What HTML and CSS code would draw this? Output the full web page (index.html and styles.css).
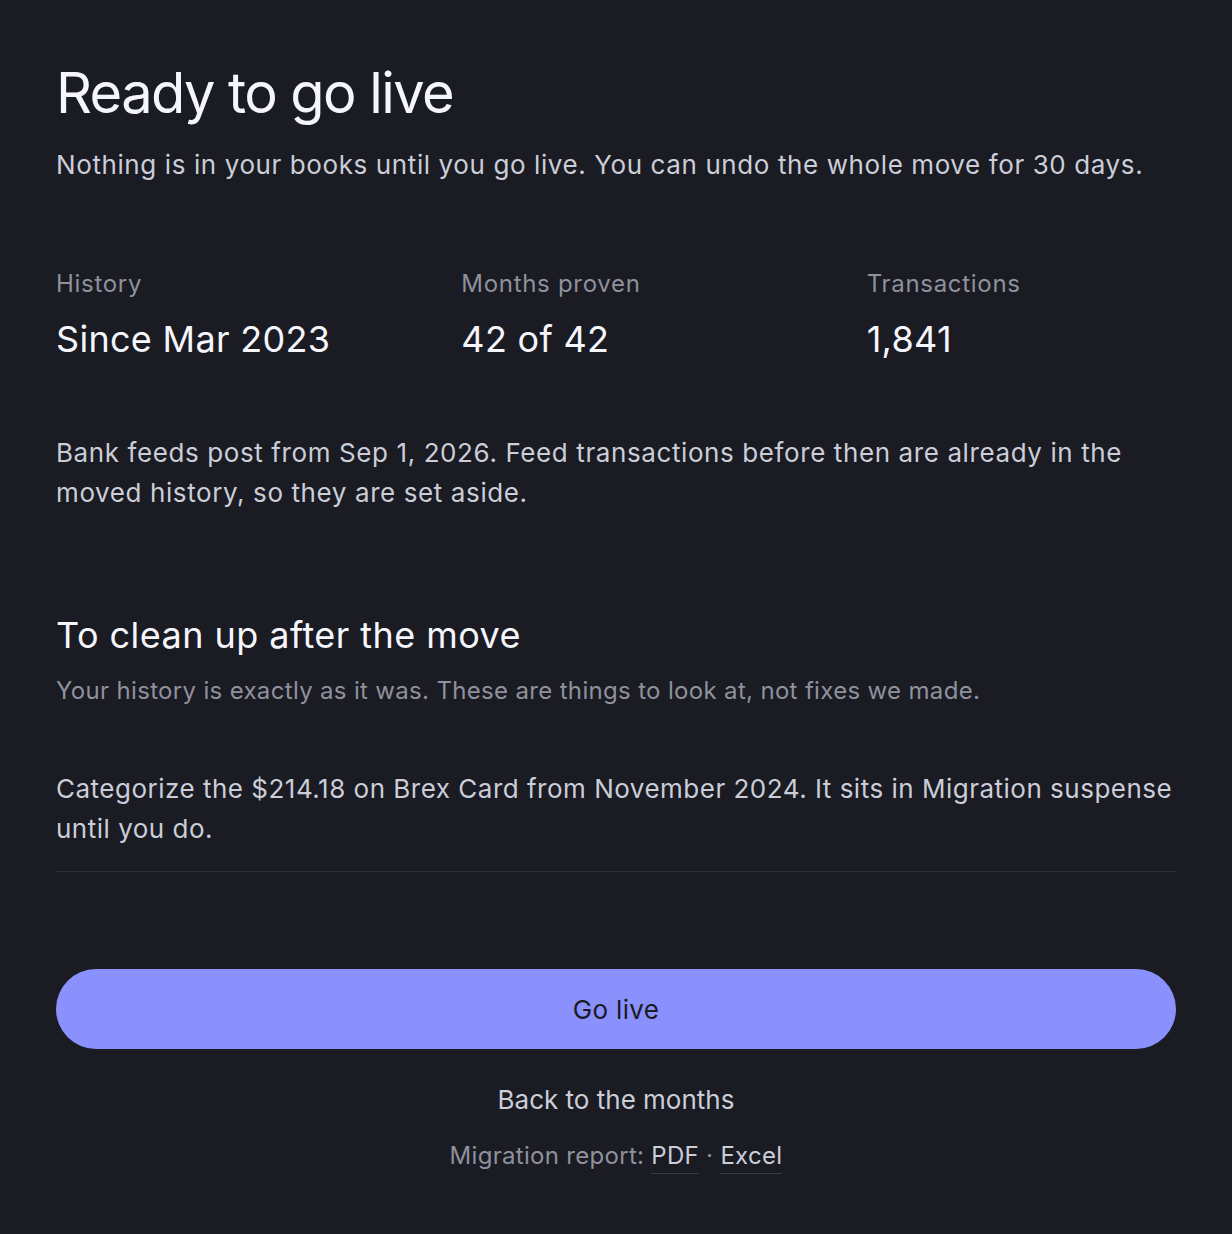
FILE: index.html
```html
<!DOCTYPE html>
<html lang="en">
<head>
    <meta charset="UTF-8">
    <meta name="viewport" content="width=device-width, initial-scale=1.0">
    <title>Ready to go live</title>
    <link rel="stylesheet" href="styles.css">
</head>
<body>

    <div class="page">
        <!-- Header -->
        <h1 class="title">Ready to go live</h1>
        <p class="lead">Nothing is in your books until you go live. You can undo the whole move for 30 days.</p>

        <!-- Stats -->
        <div class="stats">
            <div class="stat">
                <div class="stat-label">History</div>
                <div class="stat-value">Since Mar 2023</div>
            </div>
            <div class="stat">
                <div class="stat-label">Months proven</div>
                <div class="stat-value">42 of 42</div>
            </div>
            <div class="stat">
                <div class="stat-label">Transactions</div>
                <div class="stat-value">1,841</div>
            </div>
        </div>

        <p class="note">Bank feeds post from Sep 1, 2026. Feed transactions before then are already in the moved history, so they are set aside.</p>

        <!-- Cleanup -->
        <h2 class="section-title">To clean up after the move</h2>
        <p class="section-sub">Your history is exactly as it was. These are things to look at, not fixes we made.</p>

        <ul class="todo">
            <li>Categorize the $214.18 on Brex Card from November 2024. It sits in Migration suspense until you do.</li>
        </ul>

        <!-- Actions -->
        <button class="go-live">Go live</button>
        <a class="back" href="#">Back to the months</a>
        <div class="report">
            Migration report: <a href="#">PDF</a> · <a href="#">Excel</a>
        </div>
    </div>

</body>
</html>
```

FILE: styles.css
```css
body {
    margin: 0;
    padding: 0;
    background-color: #1a1b23;
    font-family: Inter, "Noto Sans", sans-serif;
    color: #cbcdd8;
}

.page {
    padding: 62px 56px 40px;
}

.title {
    margin: 0;
    font-size: 56px;
    line-height: 62px;
    font-weight: 400;
    color: #f5f6fb;
    letter-spacing: -1.6px;
}

.lead {
    margin: 21px 0 0;
    font-size: 26px;
    line-height: 40px;
    letter-spacing: 0.6px;
}

.stats {
    display: grid;
    grid-template-columns: repeat(3, 1fr);
    gap: 96px;
    margin-top: 83px;
}

.stat-label {
    font-size: 24px;
    line-height: 32px;
    color: #8f919d;
    letter-spacing: 0.7px;
}

.stat-value {
    margin-top: 17px;
    font-size: 36px;
    line-height: 44px;
    color: #f5f6fb;
    letter-spacing: 0.3px;
}

.note {
    margin: 72px 0 0;
    font-size: 26px;
    line-height: 40px;
    letter-spacing: 0.6px;
}

.section-title {
    margin: 100px 0 0;
    font-size: 36px;
    line-height: 44px;
    font-weight: 400;
    color: #f5f6fb;
    letter-spacing: 0.45px;
}

.section-sub {
    margin: 18px 0 0;
    font-size: 24px;
    line-height: 32px;
    color: #8f919d;
    letter-spacing: 0.33px;
}

.todo {
    list-style: none;
    margin: 62px 0 0;
    padding: 0;
}

.todo li {
    font-size: 26px;
    line-height: 40px;
    letter-spacing: 0.5px;
    padding-bottom: 22px;
    border-bottom: 1px solid #2d2e37;
}

.go-live {
    display: block;
    width: 100%;
    height: 80px;
    margin-top: 97px;
    border: none;
    border-radius: 40px;
    background-color: #8a91fd;
    color: #1a1b23;
    font-family: inherit;
    font-size: 26px;
    letter-spacing: 0.3px;
    cursor: pointer;
}

.back {
    display: block;
    margin-top: 31px;
    text-align: center;
    font-size: 26px;
    line-height: 40px;
    color: #cbcdd8;
    text-decoration: none;
}

.report {
    margin-top: 20px;
    text-align: center;
    font-size: 24px;
    line-height: 32px;
    color: #8f919d;
    letter-spacing: 0.3px;
}

.report a {
    color: #cbcdd8;
    text-decoration: none;
    border-bottom: 1px solid #3a3b46;
    padding-bottom: 3px;
}
```
